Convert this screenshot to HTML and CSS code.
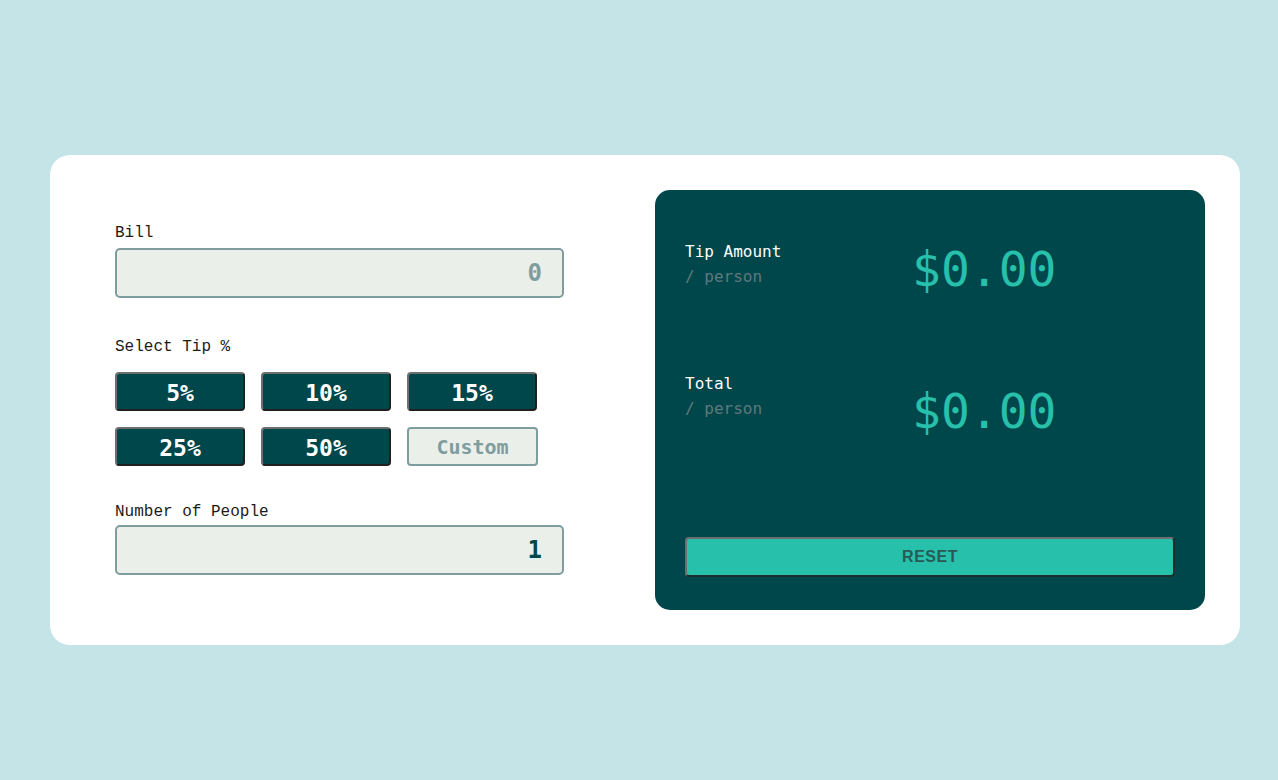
FILE: index.html
```html
<!DOCTYPE html>
<html lang="en">
<head>
<meta charset="utf-8">
<title>Tip Calculator</title>
<link rel="stylesheet" href="styles.css">
</head>
<body>
<main class="card">
  <section class="inputs">
    <label class="label" for="bill">Bill</label>
    <input class="field" id="bill" type="text" placeholder="0">

    <div class="label tip-label">Select Tip %</div>
    <div class="tips">
      <button class="tip">5%</button>
      <button class="tip">10%</button>
      <button class="tip">15%</button>
      <button class="tip">25%</button>
      <button class="tip">50%</button>
      <input class="custom" type="text" placeholder="Custom">
    </div>

    <label class="label people-label" for="people">Number of People</label>
    <input class="field people" id="people" type="text" value="1">
  </section>

  <section class="results">
    <div class="row">
      <div class="row-text">
        <div class="row-title">Tip Amount</div>
        <div class="row-sub">/ person</div>
      </div>
      <div class="amount">$0.00</div>
    </div>
    <div class="row row-total">
      <div class="row-text">
        <div class="row-title">Total</div>
        <div class="row-sub">/ person</div>
      </div>
      <div class="amount amount-total">$0.00</div>
    </div>
    <button class="reset">RESET</button>
  </section>
</main>
</body>
</html>
```

FILE: styles.css
```css
* { box-sizing: border-box; }

html, body {
  margin: 0;
  padding: 0;
  background: #c5e4e7;
}

body {
  padding: 155px 38px 0 50px;
  font-family: "Liberation Mono", "DejaVu Sans Mono", monospace;
}

.card {
  width: 1190px;
  height: 490px;
  background: #ffffff;
  border-radius: 20px;
  display: flex;
  padding: 35px 35px 35px 65px;
}

.inputs {
  width: 449px;
  display: flex;
  flex-direction: column;
  padding-top: 34px;
}

.label {
  font-size: 16px;
  line-height: 18px;
  color: #1b1b1b;
  margin-bottom: 6px;
}

.field {
  width: 449px;
  height: 50px;
  border: 2px solid #7f9d9f;
  border-radius: 5px;
  background: #eaefea;
  text-align: right;
  padding: 0 20px;
  font-family: "DejaVu Sans Mono", monospace;
  font-weight: bold;
  font-size: 24px;
  color: #00474b;
  outline: none;
}

.field::placeholder { color: #7f9d9f; }

.tip-label { margin-top: 40px; margin-bottom: 16px; }

.tips {
  display: grid;
  grid-template-columns: repeat(3, 130px);
  grid-auto-rows: 39px;
  column-gap: 16px;
  row-gap: 16px;
}

.tip {
  background: #00474b;
  color: #ffffff;
  font-family: "DejaVu Sans Mono", monospace;
  font-weight: bold;
  font-size: 23px;
  border: 2px solid;
  border-color: #6e6e6e #202020 #202020 #6e6e6e;
  border-radius: 4px;
  padding: 2px 0 0 0;
  cursor: pointer;
}

.custom {
  background: #eaefea;
  border: 2px solid #7f9d9f;
  border-radius: 4px;
  text-align: center;
  font-family: "DejaVu Sans Mono", monospace;
  font-weight: bold;
  font-size: 20px;
  color: #7f9c9f;
  padding: 0;
  width: 131px;
}

.custom::placeholder { color: #7f9c9f; }

.people-label { margin-top: 37px; margin-bottom: 4px; }

.people { color: #00474b; }

.results {
  margin-left: auto;
  width: 550px;
  background: #00474b;
  border-radius: 15px;
  padding: 48px 30px 33px 30px;
  display: flex;
  flex-direction: column;
}

.row {
  display: flex;
  align-items: flex-start;
}

.row-total { margin-top: 77px; }

.row-text { width: 227px; margin-top: 4px; }

.row-total .row-text { margin-top: 0; }

.row-title {
  font-family: "DejaVu Sans Mono", monospace;
  font-size: 16px;
  line-height: 20px;
  color: #ffffff;
}

.row-sub {
  font-family: "DejaVu Sans Mono", monospace;
  font-size: 16px;
  line-height: 20px;
  color: #5e7a7d;
  margin-top: 5px;
}

.amount {
  font-family: "DejaVu Sans Mono", monospace;
  font-size: 48px;
  line-height: 56px;
  color: #26c0ab;
  margin-top: 3px;
}

.amount-total { margin-top: 9px; }

.reset {
  margin-top: auto;
  height: 40px;
  width: 490px;
  background: #26c0ab;
  border: 2px solid;
  border-color: #6e6e6e #1e2e2e #1e2e2e #6e6e6e;
  border-radius: 4px;
  font-family: "Liberation Sans", Arial, sans-serif;
  font-weight: bold;
  font-size: 16px;
  letter-spacing: 0.5px;
  color: #285a57;
  cursor: pointer;
}
```
